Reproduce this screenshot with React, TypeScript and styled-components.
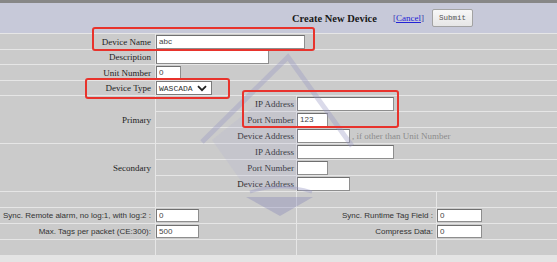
import React from 'react';
import styled, { createGlobalStyle } from 'styled-components';

const GlobalStyle = createGlobalStyle`
  html, body {
    margin: 0;
    padding: 0;
    background: #e4e4e4;
  }
  body {
    font-family: "Liberation Serif", "Times New Roman", serif;
  }
`;

const Page = styled.div`
  position: relative;
  width: 557px;
  height: 262px;
  overflow: hidden;
  background: #e4e4e4;
`;

const Grid = styled.div`
  display: grid;
  grid-template-columns: 155px 140px 139px 1fr;
  grid-template-rows: 30px 15px 14px 15px 14px repeat(10, 15px);
  gap: 1px;
  border-top: 3px solid #878787;
  background: #e6e6e6;
`;

const Header = styled.div`
  grid-column: 1 / -1;
  display: flex;
  align-items: center;
  padding-left: 292px;
  background: #c7c9d9;
`;

const Title = styled.span`
  font-size: 10.5px;
  font-weight: bold;
  color: #1a1a1a;
`;

const CancelWrap = styled.span`
  margin-left: 16px;
  font-size: 9px;
  color: #3b3ba8;
`;

const CancelLink = styled.a`
  color: #2323d6;
  text-decoration: underline;
`;

const SubmitButton = styled.button`
  margin-left: 8px;
  width: 41px;
  height: 18px;
  padding: 0;
  border: 1px solid #a3a3a3;
  border-radius: 2px;
  background: linear-gradient(#f7f7f7, #e6e6e6);
  font-family: "Liberation Mono", "Courier New", monospace;
  font-size: 7.5px;
  color: #555;
`;

const Cell = styled.div<{ $span?: number; $col?: number; $rows?: number }>`
  grid-column: ${p => (p.$col ? `${p.$col} / span ${p.$span || 1}` : `span ${p.$span || 1}`)};
  grid-row: ${p => (p.$rows ? `span ${p.$rows}` : 'auto')};
  display: flex;
  align-items: center;
  background: #cbcbcb;
  min-width: 0;
`;

const Label = styled(Cell)<{ $pad?: number }>`
  justify-content: flex-end;
  padding-right: ${p => p.$pad ?? 4}px;
  font-size: 9px;
  color: #1e1e1e;
  white-space: nowrap;
`;

const SansLabel = styled(Label)`
  font-family: "Liberation Sans", Arial, sans-serif;
  font-size: 8px;
  color: #333;
`;

const Value = styled(Cell)`
  gap: 2px;
`;

const TextInput = styled.input<{ $w: number; $h?: number }>`
  box-sizing: border-box;
  width: ${p => p.$w}px;
  height: ${p => p.$h ?? 14}px;
  margin: 0;
  padding: 0 2px;
  border: 1px solid #8e8e8e;
  border-top-color: #6f6f6f;
  border-left-color: #777;
  background: #fff;
  font-family: "Liberation Sans", Arial, sans-serif;
  font-size: 8px;
  color: #444;
  outline: none;
`;

const SelectBox = styled.div`
  box-sizing: border-box;
  width: 56px;
  height: 14px;
  display: flex;
  align-items: center;
  justify-content: space-between;
  padding: 0 4px 0 2px;
  border: 1px solid #7a7a7a;
  background: #fff;
  font-family: "Liberation Mono", "Courier New", monospace;
  font-size: 8px;
  color: #333;
`;

const Hint = styled.span`
  font-size: 9px;
  color: #8c8c8c;
  white-space: nowrap;
`;

const Marker = styled.div<{ $x: number; $y: number; $w: number; $h: number }>`
  position: absolute;
  left: ${p => p.$x}px;
  top: ${p => p.$y}px;
  width: ${p => p.$w}px;
  height: ${p => p.$h}px;
  box-sizing: border-box;
  border: 2px solid #e8332c;
  border-radius: 3px;
  pointer-events: none;
`;

const Watermark = styled.svg`
  position: absolute;
  left: 0;
  top: 0;
  pointer-events: none;
`;

const Chevron = () => (
  <svg width="10" height="7" viewBox="0 0 10 7">
    <path d="M1 1.2 L5 5.2 L9 1.2" fill="none" stroke="#222" strokeWidth="1.8" />
  </svg>
);

const Empty = () => (
  <>
    <Cell />
    <Cell />
    <Cell />
    <Cell />
  </>
);

export default function App() {
  return (
    <Page>
      <GlobalStyle />
      <Grid>
        <Header>
          <Title>Create New Device</Title>
          <CancelWrap>
            [<CancelLink href="#">Cancel</CancelLink>]
          </CancelWrap>
          <SubmitButton type="button">Submit</SubmitButton>
        </Header>

        <Label>Device Name</Label>
        <Value $span={3}>
          <TextInput $w={149} defaultValue="abc" />
        </Value>

        <Label>Description</Label>
        <Value $span={3}>
          <TextInput $w={113} />
        </Value>

        <Label>Unit Number</Label>
        <Value $span={3}>
          <TextInput $w={25} defaultValue="0" />
        </Value>

        <Label>Device Type</Label>
        <Value $span={3}>
          <SelectBox>
            WASCADA
            <Chevron />
          </SelectBox>
        </Value>

        <Label $rows={3}>Primary</Label>
        <Label $col={2} $pad={2}>IP Address</Label>
        <Value $span={2}>
          <TextInput $w={97} />
        </Value>
        <Label $col={2} $pad={2}>Port Number</Label>
        <Value $span={2}>
          <TextInput $w={31} defaultValue="123" />
        </Value>
        <Label $col={2} $pad={2}>Device Address</Label>
        <Value $span={2}>
          <TextInput $w={53} />
          <Hint>, if other than Unit Number</Hint>
        </Value>

        <Label $rows={3}>Secondary</Label>
        <Label $col={2} $pad={2}>IP Address</Label>
        <Value $span={2}>
          <TextInput $w={97} />
        </Value>
        <Label $col={2} $pad={2}>Port Number</Label>
        <Value $span={2}>
          <TextInput $w={31} />
        </Value>
        <Label $col={2} $pad={2}>Device Address</Label>
        <Value $span={2}>
          <TextInput $w={53} />
        </Value>

        <Empty />

        <SansLabel>Sync. Remote alarm, no log:1, with log:2 :</SansLabel>
        <Value>
          <TextInput $w={43} $h={13} defaultValue="0" />
        </Value>
        <SansLabel $pad={3}>Sync. Runtime Tag Field :</SansLabel>
        <Value>
          <TextInput $w={45} $h={13} defaultValue="0" />
        </Value>

        <SansLabel>Max. Tags per packet (CE:300):</SansLabel>
        <Value>
          <TextInput $w={43} $h={13} defaultValue="500" />
        </Value>
        <SansLabel $pad={3}>Compress Data:</SansLabel>
        <Value>
          <TextInput $w={45} $h={13} defaultValue="0" />
        </Value>

        <Empty />
      </Grid>

      <Watermark width="557" height="262" viewBox="0 0 557 262">
        <path d="M202 142 L288 57 L352 146" fill="none" stroke="rgba(150,150,195,0.35)" strokeWidth="5" />
        <polygon points="212,140 262,100 298,100 298,188 246,188" fill="rgba(170,170,210,0.18)" />
        <path d="M250 192 Q280 182 312 192" fill="none" stroke="rgba(150,150,195,0.4)" strokeWidth="3" />
        <polygon points="246,197 313,197 280,216" fill="rgba(130,130,180,0.35)" />
      </Watermark>

      <Marker $x={92} $y={27} $w={223} $h={24} />
      <Marker $x={85} $y={78} $w={145} $h={21} />
      <Marker $x={242} $y={90} $w={157} $h={38} />
    </Page>
  );
}
